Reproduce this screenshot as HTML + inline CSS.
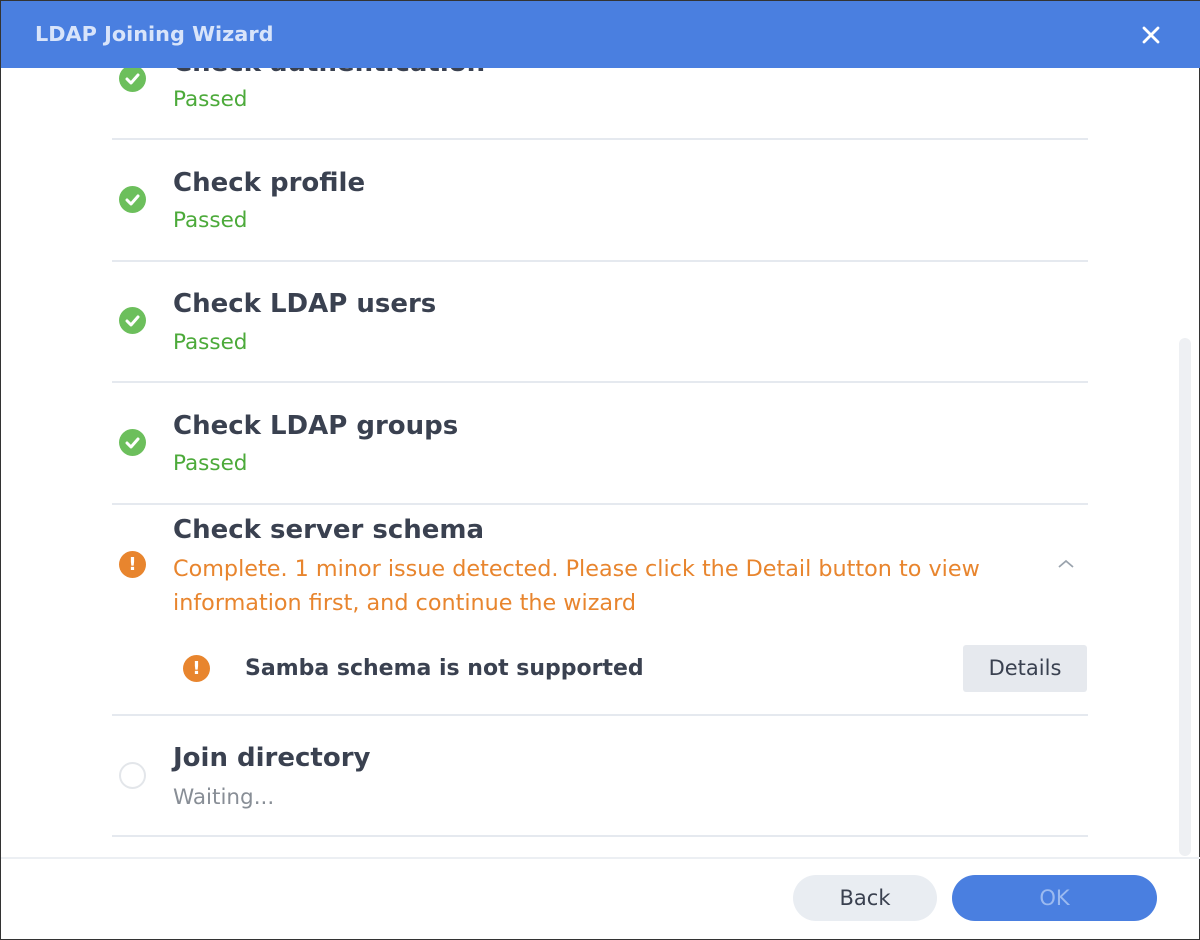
<!DOCTYPE html>
<html><head><meta charset="utf-8"><style>
*{margin:0;padding:0;box-sizing:border-box}
body{width:1200px;height:940px;background:#fff;font-family:"DejaVu Sans","Liberation Sans",sans-serif;position:relative;overflow:hidden;border:1px solid #333}
.a{position:absolute;white-space:nowrap}
.t{font-size:26px;font-weight:bold;color:#3a4150;left:172px}
.p{font-size:21.5px;color:#4caa3a;left:172px}
.sep{position:absolute;left:111px;width:976px;height:2px;background:#e5e9ef}
.ok{position:absolute;left:118px;width:27px;height:27px;border-radius:50%;background:#6cbf5c}
.ok svg{position:absolute;left:0;top:0}
.wr{position:absolute;width:27px;height:27px;border-radius:50%;background:#e8852e;color:#fff;font-weight:bold;font-size:18px;text-align:center;line-height:27px}
</style></head><body>
<div class="a t" style="top:47px">Check authentication</div>
<div class="ok" style="top:64px"><svg width="27" height="27"><path d="M8 14l4 4 7-8" stroke="#fff" stroke-width="3" fill="none" stroke-linecap="round" stroke-linejoin="round"/></svg></div>
<div class="a p" style="top:86px">Passed</div>
<div style="position:absolute;left:0;top:0;width:1200px;height:67px;background:#4a7fe0"></div>
<div class="a" style="left:34px;top:21px;color:#d8e4fa;font-size:20.8px;font-weight:bold">LDAP Joining Wizard</div>
<svg class="a" style="left:1140px;top:24px" width="20" height="20"><path d="M3 3l14 14M17 3L3 17" stroke="#fff" stroke-width="2.8" stroke-linecap="round"/></svg>
<div class="sep" style="top:137px"></div>

<div class="a t" style="top:167px">Check profile</div>
<div class="ok" style="top:185px"><svg width="27" height="27"><path d="M8 14l4 4 7-8" stroke="#fff" stroke-width="3" fill="none" stroke-linecap="round" stroke-linejoin="round"/></svg></div>
<div class="a p" style="top:207px">Passed</div>
<div class="sep" style="top:259px"></div>

<div class="a t" style="top:288px">Check LDAP users</div>
<div class="ok" style="top:306px"><svg width="27" height="27"><path d="M8 14l4 4 7-8" stroke="#fff" stroke-width="3" fill="none" stroke-linecap="round" stroke-linejoin="round"/></svg></div>
<div class="a p" style="top:329px">Passed</div>
<div class="sep" style="top:380px"></div>

<div class="a t" style="top:410px">Check LDAP groups</div>
<div class="ok" style="top:428px"><svg width="27" height="27"><path d="M8 14l4 4 7-8" stroke="#fff" stroke-width="3" fill="none" stroke-linecap="round" stroke-linejoin="round"/></svg></div>
<div class="a p" style="top:450px">Passed</div>
<div class="sep" style="top:502px"></div>

<div class="a t" style="top:514px">Check server schema</div>
<div class="wr" style="left:118px;top:550px">!</div>
<div class="a" style="left:172px;top:551px;font-size:22.3px;color:#e8852e;line-height:34px">Complete. 1 minor issue detected. Please click the Detail button to view<br>information first, and continue the wizard</div>
<svg class="a" style="left:1056px;top:557px" width="18" height="12"><path d="M2 9l7-6 7 6" stroke="#9aa3ad" stroke-width="1.8" fill="none"/></svg>
<div class="wr" style="left:182px;top:654px">!</div>
<div class="a" style="left:244px;top:655px;font-size:22px;font-weight:bold;color:#3a4150">Samba schema is not supported</div>
<div class="a" style="left:962px;top:644px;width:124px;height:47px;background:#e6e9ee;border-radius:3px;text-align:center;line-height:47px;font-size:21px;color:#3a4150">Details</div>
<div class="sep" style="top:713px"></div>

<div class="a t" style="top:742px">Join directory</div>
<div style="position:absolute;left:118px;top:761px;width:27px;height:27px;border-radius:50%;border:2px solid #e3e6ea"></div>
<div class="a" style="left:172px;top:784px;font-size:21.5px;color:#888e96">Waiting...</div>
<div class="sep" style="top:834px"></div>

<div style="position:absolute;left:1178px;top:337px;width:12px;height:518px;border-radius:6px;background:#eef0f3"></div>
<div style="position:absolute;left:0;top:856px;width:1200px;height:2px;background:#eceff3"></div>
<div class="a" style="left:792px;top:874px;width:144px;height:46px;border-radius:23px;background:#e9edf2;text-align:center;line-height:46px;font-size:21px;color:#3a4150">Back</div>
<div class="a" style="left:951px;top:874px;width:205px;height:46px;border-radius:23px;background:#4a7fe0;text-align:center;line-height:46px;font-size:21px;color:#9bbaf0">OK</div>
</body></html>
